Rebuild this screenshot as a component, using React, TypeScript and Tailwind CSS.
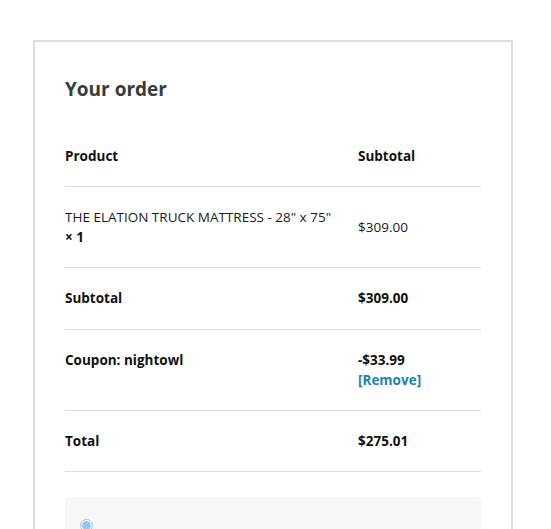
import React from "react";

export default function App() {
  const font = { fontFamily: '"Open Sans", "Liberation Sans", sans-serif' };
  return (
    <div className="min-h-[529px] bg-white pl-[33px] pt-[40px]" style={font}>
      <div className="w-[480px] border-2 border-[#dddddd] px-[30px] pb-[40px] pt-[35px]">
        <h3 className="text-[19px] font-bold leading-[24px] text-[#3a3a3a]">Your order</h3>
        <div className="mt-[24.6px] text-[13.5px] leading-[20.25px] text-[#1a1a1a]">
          <div className="grid grid-cols-[293px_1fr] border-b border-[#dedede] py-[20px] font-bold text-[#111]">
            <div>Product</div>
            <div>Subtotal</div>
          </div>
          <div className="grid grid-cols-[293px_1fr] items-center border-b border-[#dedede] py-[20px]">
            <div>
              THE ELATION TRUCK MATTRESS - 28" x 75"
              <strong className="block font-bold text-[#111]">× 1</strong>
            </div>
            <div>$309.00</div>
          </div>
          <div className="grid grid-cols-[293px_1fr] border-b border-[#dedede] py-[20px] font-bold text-[#111]">
            <div>Subtotal</div>
            <div>$309.00</div>
          </div>
          <div className="grid grid-cols-[293px_1fr] border-b border-[#dedede] py-[20px] font-bold text-[#111]">
            <div>Coupon: nightowl</div>
            <div>
              <div>-$33.99</div>
              <a className="block text-[#2283a2]">[Remove]</a>
            </div>
          </div>
          <div className="grid grid-cols-[293px_1fr] border-b border-[#dedede] py-[20px] font-bold text-[#111]">
            <div>Total</div>
            <div>$275.01</div>
          </div>
        </div>
        <div className="mt-[24.5px] h-[120px] rounded-[5px] bg-[#f7f7f9] px-[15px] pt-[22px]">
          <div className="flex h-[13px] w-[13px] items-center justify-center rounded-full border border-[#9cc4ee] bg-white">
            <div className="h-[9px] w-[9px] rounded-full bg-[#9cc4ee]" />
          </div>
        </div>
      </div>
    </div>
  );
}
